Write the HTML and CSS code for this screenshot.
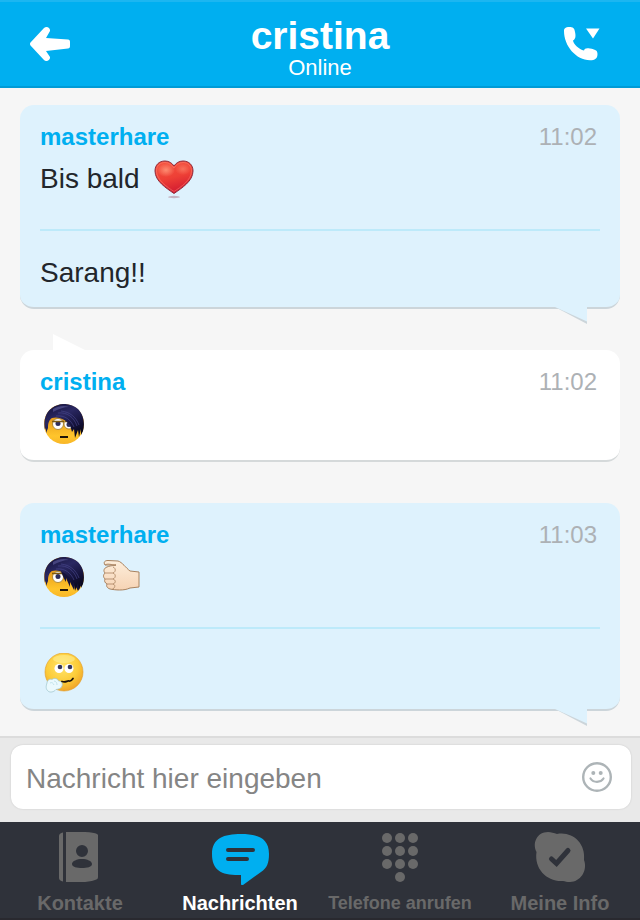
FILE: index.html
```html
<!DOCTYPE html>
<html lang="de">
<head>
    <meta charset="UTF-8">
    <meta name="viewport" content="width=device-width, initial-scale=1.0">
    <title>cristina</title>
    <link rel="stylesheet" href="styles.css">
</head>
<body>

<!-- Shared gradients and emoticon parts -->
<svg class="defs" width="0" height="0" aria-hidden="true">
    <defs>
        <radialGradient id="skin" cx="45%" cy="35%" r="65%">
            <stop offset="0" stop-color="#ffe56a"/>
            <stop offset="0.65" stop-color="#fccb38"/>
            <stop offset="1" stop-color="#f0a52a"/>
        </radialGradient>
        <linearGradient id="emoSkin" x1="0" y1="0" x2="0" y2="1">
            <stop offset="0.4" stop-color="#e9a01c"/>
            <stop offset="0.8" stop-color="#ffc52c"/>
            <stop offset="1" stop-color="#f8b628"/>
        </linearGradient>
        <linearGradient id="hair" x1="0.2" y1="0" x2="0.8" y2="1">
            <stop offset="0" stop-color="#17153f"/>
            <stop offset="0.35" stop-color="#2a2862"/>
            <stop offset="0.7" stop-color="#14123a"/>
            <stop offset="1" stop-color="#050410"/>
        </linearGradient>
        <linearGradient id="love" x1="0.3" y1="0" x2="0.6" y2="1">
            <stop offset="0" stop-color="#f4523f"/>
            <stop offset="0.5" stop-color="#ee4036"/>
            <stop offset="1" stop-color="#cf1630"/>
        </linearGradient>
        <radialGradient id="loveShine">
            <stop offset="0" stop-color="#ff9478" stop-opacity="0.9"/>
            <stop offset="1" stop-color="#ff9478" stop-opacity="0"/>
        </radialGradient>
        <linearGradient id="palm" x1="0" y1="0" x2="0" y2="1">
            <stop offset="0" stop-color="#fdeedb"/>
            <stop offset="1" stop-color="#f6d3b4"/>
        </linearGradient>
        <symbol id="emoHair" viewBox="0 0 40 40">
            <path d="M1 26C-1 16 2 8 8 4C16-2 27-1 34 5C40 11 41 20 39 27L37 31L37 25L35 33L34 26L31 34L30 25L28 28L26 21C21 15 14 12 8 14C5 16 4 19 4 24L2 29L2 24Z" fill="url(#hair)"/>
            <path d="M14 9C23 8 30 13 33 22M17 7C26 8 32 13 35 21M12 12C21 11 27 16 30 23" fill="none" stroke="#4b4990" stroke-width="0.6"/>
            <path d="M9 5C14 2 20 1 25 3C20 3 14 5 9 8Z" fill="#6664a5" opacity="0.55"/>
        </symbol>
    </defs>
</svg>

<div class="app">
    <header class="topbar">
        <button class="icon-button back" type="button" aria-label="Zurück">
            <svg width="40" height="34" viewBox="0 0 40 34">
                <path d="M0.5 15.500L14 1C16.500-1 20.500 0.500 20 4L16 11L38 12.500C39.500 12.800 40 13.500 40 15V19C40 20.500 39.500 21.200 38 21.500L16 24L20 30C20.500 33.500 16.500 35.300 14 33L0.500 18.500C-0.200 17.500-0.200 16.500 0.500 15.500Z" fill="#fff"/>
            </svg>
        </button>
        <div class="contact">
            <h1>cristina</h1>
            <p>Online</p>
        </div>
        <button class="icon-button call" type="button" aria-label="Anrufen">
            <svg width="40" height="34" viewBox="0 0 40 34">
                <path d="M4 4C4 1 6 0 9 0C13 0 14.500 1 15 5C16 9.500 15.500 12 13 13.500C13.500 17 19 22.500 24 23.500C24.500 21 27 20.800 30 21.500C35 22.500 37.500 23 37.500 27C37.500 31.500 35 33.300 30 33.300C16 33 4 19 4 4Z" fill="#fff"/>
                <path d="M26 1.500H39.500L33 11.500Z" fill="#fff"/>
            </svg>
        </button>
    </header>

    <main class="messages">
        <section class="bubble own">
            <div class="bubble-head">
                <h2>masterhare</h2>
                <time>11:02</time>
            </div>
            <div class="line">
                <span>Bis bald</span>
                <svg class="emoticon" viewBox="0 0 40 40" role="img" aria-label="Herz">
                    <ellipse cx="20" cy="38" rx="6" ry="1.200" fill="#b99aa8" opacity="0.7"/>
                    <path d="M20 34.500C12 29 1 22 1 12C1 6 5 2 11 2C15 2 18 4 20 7C22 4 25 2 29 2C35 2 39 6 39 12C39 22 28 29 20 34.500Z" fill="url(#love)" stroke="#8f2c3c"/>
                    <ellipse cx="12" cy="11" rx="9" ry="7" fill="url(#loveShine)"/>
                    <ellipse cx="29" cy="10" rx="8" ry="6" fill="url(#loveShine)" opacity="0.6"/>
                    <path d="M20 32.500C13 28 2.500 21 2.500 12C2.500 7 6 3.500 11 3.500C15 3.500 18 6 20 9C22 6 25 3.500 29 3.500C34 3.500 37.500 7 37.500 12C37.500 21 27 28 20 32.500Z" fill="none" stroke="#ff8b7c" stroke-width="0.8" opacity="0.6"/>
                </svg>
            </div>
            <div class="line follow-up text-only">
                <span>Sarang!!</span>
            </div>
            <svg class="tail" width="32" height="17" viewBox="0 0 32 17" aria-hidden="true">
                <path d="M0 0H32V17Z" fill="#ccd5da"/>
                <path d="M0 0V-2H32V14.500Z" fill="#def2fd"/>
            </svg>
        </section>

        <section class="bubble">
            <svg class="tail" width="32" height="16" viewBox="0 0 32 16" aria-hidden="true">
                <path d="M0 0V16H32Z" fill="#fff"/>
            </svg>
            <div class="bubble-head">
                <h2>cristina</h2>
                <time>11:02</time>
            </div>
            <div class="line">
                <svg class="emoticon" viewBox="0 0 40 40" role="img" aria-label="Emo">
                    <circle cx="20" cy="20" r="20" fill="url(#emoSkin)"/>
                    <circle cx="14" cy="20" r="5.500" fill="#fff" stroke="#9c7a2a" stroke-width="0.8"/>
                    <circle cx="25" cy="20" r="5" fill="#fff" stroke="#9c7a2a" stroke-width="0.8"/>
                    <circle cx="14" cy="19.500" r="2.500" fill="#2c2d5c"/>
                    <circle cx="25" cy="20.500" r="2.500" fill="#2c2d5c"/>
                    <path d="M8 17.500H20M21 17.500H30" stroke="#7c5a14" stroke-width="1.500"/>
                    <path d="M16 33H24" stroke="#201408" stroke-width="2"/>
                    <use href="#emoHair" width="40" height="40"/>
                </svg>
            </div>
        </section>

        <section class="bubble own">
            <div class="bubble-head">
                <h2>masterhare</h2>
                <time>11:03</time>
            </div>
            <div class="line">
                <svg class="emoticon" viewBox="0 0 40 40" role="img" aria-label="Emo">
                    <circle cx="20" cy="20" r="20" fill="url(#emoSkin)"/>
                    <circle cx="14" cy="20" r="5.500" fill="#fff" stroke="#9c7a2a" stroke-width="0.8"/>
                    <circle cx="14" cy="19.500" r="2.500" fill="#2c2d5c"/>
                    <path d="M8 16.500H20" stroke="#7c5a14" stroke-width="1.500"/>
                    <path d="M16 33H24" stroke="#201408" stroke-width="2"/>
                    <path d="M16 12C18 17 20 22 22 25L22 21L26 30L26 25L30 33L31 28L34 34L38 27L34 12Z" fill="#14123a"/>
                    <use href="#emoHair" width="40" height="40"/>
                </svg>
                <svg class="emoticon" viewBox="0 0 40 40" role="img" aria-label="Faust">
                    <path d="M3 8C1 5 3 3.500 6 3.500L16 4C20 5 24 11 28 14L37 15V30L28 31C22 34 13 33 8 32C5 31 4 29 5 27C3 26 2 24 3 22C1 20 1 18 3 16C1 14 2 11 5 10C10 8 12 9 14 8Z" fill="url(#palm)" stroke="#a8825f" stroke-linejoin="round"/>
                    <path d="M14 8C9 8 6 6 3 8M3 16H11C14 15 14 11 11 10M3 22H11C14 21 14 17 11 16M5 27H11C14 26 14 23 11 22M11 27C14 28 13 31 10 32.500" fill="none" stroke="#a8825f" stroke-width="0.8"/>
                </svg>
            </div>
            <div class="line follow-up">
                <svg class="emoticon" viewBox="0 0 40 40" role="img" aria-label="Verträumt">
                    <circle cx="20" cy="19" r="19" fill="url(#skin)" stroke="#e29a22" stroke-width="0.6"/>
                    <ellipse cx="20" cy="6" rx="11" ry="4" fill="#fff6a8" opacity="0.45"/>
                    <circle cx="15" cy="15.500" r="4.500" fill="#fff"/>
                    <circle cx="25" cy="15.500" r="4.500" fill="#fff"/>
                    <circle cx="16" cy="14" r="2.300" fill="#35385d"/>
                    <circle cx="26" cy="14" r="2.300" fill="#35385d"/>
                    <path d="M18 28.500C22 30 23 27.500 25 28C27 28.500 28 27 29 25.500" fill="none" stroke="#1d130b" stroke-width="1.800" stroke-linecap="round"/>
                    <path d="M3 30C3 27 6 25.500 8 26.500C10 24.500 14 25.500 14.500 28C17 28 19 30 18 33C17 36 14 36 12 36.500C10 39 6 40 4 38C1.500 36 2 33 3 30Z" fill="#eaf9fd" stroke="#a5c9d1" stroke-width="0.8"/>
                    <path d="M6 30C8 29 9 30 10 32M10 28C12 28 13 30 13 32" fill="none" stroke="#b8dce4" stroke-width="0.8"/>
                </svg>
            </div>
            <svg class="tail" width="32" height="17" viewBox="0 0 32 17" aria-hidden="true">
                <path d="M0 0H32V17Z" fill="#ccd5da"/>
                <path d="M0 0V-2H32V14.500Z" fill="#def2fd"/>
            </svg>
        </section>
    </main>

    <form class="composer">
        <div class="composer-box">
            <input type="text" id="messageInput" placeholder="Nachricht hier eingeben" aria-label="Nachricht hier eingeben">
            <button class="icon-button" type="button" aria-label="Emoticons">
                <svg width="30" height="30" viewBox="0 0 30 30">
                    <circle cx="15" cy="15" r="13.800" fill="none" stroke="#adb4b7" stroke-width="2.400"/>
                    <circle cx="11.300" cy="11" r="2" fill="#adb4b7"/>
                    <circle cx="18.700" cy="11" r="2" fill="#adb4b7"/>
                    <path d="M8.500 16.500C11.500 21 18.500 21 21.500 16.500" fill="none" stroke="#adb4b7" stroke-width="2.200" stroke-linecap="round"/>
                </svg>
            </button>
        </div>
    </form>

    <nav class="tabs">
        <a href="#kontakte">
            <svg width="60" height="52" viewBox="0 0 60 52" fill="currentColor">
                <path d="M13 1.500V50.500C10.500 50 9 49 9 47V5C9 3 10.500 2 13 1.500Z"/>
                <path fill-rule="evenodd" d="M16 1H35C41 1 45 2 47 3C48 3.500 48 4 48 5V46C48 48 47 48.500 45 49C41 50.500 36 51 32 51H16ZM32 14A6 6 0 1 0 32 26A6 6 0 1 0 32 14ZM32 28C27 28 22 30 22 33C22 36 27 37 32 37C37 37 42 36 42 33C42 30 37 28 32 28Z"/>
            </svg>
            <span>Kontakte</span>
        </a>
        <a class="active" href="#nachrichten">
            <svg width="60" height="54" viewBox="0 0 60 54">
                <path d="M31 3C48 3 59 7 59 23C59 32 57 37 51 41L33 54C31.500 54.500 31 54 31 52.500V44C12 44.500 2 40 2 23C2 7 14 3 31 3Z" fill="#00aff0"/>
                <path d="M18 19H43M18 28H37" stroke="#2f323a" stroke-width="4" stroke-linecap="round"/>
            </svg>
            <span>Nachrichten</span>
        </a>
        <a class="compact" href="#telefon">
            <svg width="60" height="52" viewBox="0 0 60 52" fill="currentColor">
                <circle cx="17" cy="7" r="5"/><circle cx="30" cy="7" r="5"/><circle cx="43" cy="7" r="5"/>
                <circle cx="17" cy="20" r="5"/><circle cx="30" cy="20" r="5"/><circle cx="43" cy="20" r="5"/>
                <circle cx="17" cy="33" r="5"/><circle cx="30" cy="33" r="5"/><circle cx="43" cy="33" r="5"/>
                <circle cx="30" cy="46" r="5"/>
            </svg>
            <span>Telefone anrufen</span>
        </a>
        <a href="#info">
            <svg width="60" height="52" viewBox="0 0 60 52">
                <path d="M18 1C21 1 24 2 27 3C42 0 56 12 54 29C58 40 50 51 40 51C37 51 35 50.500 33 50C17 51 4 38 6.500 21C2 12 7 1 18 1Z" fill="currentColor"/>
                <path d="M21.500 28L26.500 32.500L38 19.500" fill="none" stroke="#2f323a" stroke-width="5" stroke-linecap="round"/>
            </svg>
            <span>Meine Info</span>
        </a>
    </nav>
</div>

</body>
</html>
```
FILE: styles.css
```css
* {
    box-sizing: border-box;
}

body {
    margin: 0;
    font-family: "Liberation Sans", Arial, Helvetica, sans-serif;
    background-color: #f6f6f6;
    color: #22262b;
}

h1, h2, p {
    margin: 0;
}

svg {
    display: block;
}

.defs {
    position: absolute;
}

.app {
    display: flex;
    flex-direction: column;
    min-height: 100vh;
}

.icon-button {
    padding: 0;
    border: none;
    background: none;
    cursor: pointer;
}

/* Header */
.topbar {
    display: flex;
    align-items: center;
    justify-content: space-between;
    padding: 14px 30px 6px;
    background-color: #00aff0;
    border-top: 2px solid #1cb6f1;
    border-bottom: 2px solid #009bd6;
    color: #fff;
}

.topbar .icon-button {
    width: 50px;
    padding-bottom: 8px;
}

.contact {
    text-align: center;
}

.contact h1 {
    font-size: 39px;
    line-height: 40px;
}

.contact p {
    font-size: 22px;
    line-height: 24px;
}

/* Conversation */
.messages {
    flex: 1;
    display: flex;
    flex-direction: column;
    gap: 41px;
    padding: 17px 20px 22px;
}

.bubble {
    position: relative;
    padding: 16px 20px 10px;
    background-color: #fff;
    border-bottom: 2px solid #d5d9da;
    border-radius: 14px;
}

.bubble.own {
    background-color: #def2fd;
    border-bottom-color: #ccd5da;
}

.bubble-head {
    display: flex;
    justify-content: space-between;
    padding-right: 3px;
    font-size: 24px;
    line-height: 32px;
}

.bubble-head h2 {
    font-size: 24px;
    color: #00aff0;
}

.bubble-head time {
    color: #adb1b5;
}

.line {
    display: flex;
    align-items: center;
    gap: 10px;
    min-height: 52px;
    font-size: 28px;
}

.line.text-only {
    min-height: 48px;
}

.line.follow-up {
    margin-top: 24px;
    padding-top: 18px;
    border-top: 2px solid #bdeafa;
    box-sizing: content-box;
}

.emoticon {
    width: 40px;
    height: 40px;
    margin: 0 4px;
}

.tail {
    position: absolute;
    left: 33px;
    bottom: 100%;
}

.own .tail {
    left: auto;
    right: 33px;
    bottom: auto;
    top: 100%;
}

/* Message input */
.composer {
    padding: 7px 9px 13px 11px;
    background-color: #e9e9e9;
    border-top: 2px solid #dcdcdc;
}

.composer-box {
    display: flex;
    align-items: center;
    padding: 0 19px 0 15px;
    background-color: #fff;
    border-radius: 12px;
    box-shadow: 0 0 2px rgba(0, 0, 0, 0.15);
}

.composer-box input {
    flex: 1;
    min-width: 0;
    height: 64px;
    padding: 3px 0 0;
    border: none;
    outline: none;
    background: none;
    font-family: inherit;
    font-size: 28px;
}

.composer-box input::placeholder {
    color: #858585;
    opacity: 1;
}

/* Bottom navigation */
.tabs {
    display: grid;
    grid-template-columns: repeat(4, 1fr);
    background-color: #2f323a;
    border-bottom: 2px solid #29292f;
}

.tabs a {
    display: flex;
    flex-direction: column;
    align-items: center;
    justify-content: space-between;
    height: 96px;
    padding: 9px 0 3px;
    color: #696969;
    font-size: 20px;
    font-weight: bold;
    line-height: 24px;
    text-decoration: none;
    white-space: nowrap;
}

.tabs a.active {
    color: #fff;
}

.tabs a.compact {
    font-size: 18px;
}
```
